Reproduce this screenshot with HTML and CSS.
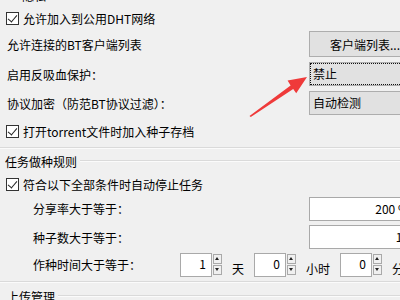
FILE: index.html
```html
<!DOCTYPE html>
<html lang="zh-CN">
<head>
    <meta charset="UTF-8">
    <title>BT设置</title>
    <link rel="stylesheet" href="styles.css">
</head>
<body>
    <div class="panel">
        <div class="row row-cut"><span class="cut-text">隐私</span></div>

        <div class="row row-dht">
            <span class="checkbox checked"></span>
            <span class="label">允许加入到公用DHT网络</span>
        </div>

        <div class="row row-grid row-bt">
            <span class="label">允许连接的BT客户端列表</span>
            <button class="btn">客户端列表...</button>
        </div>

        <div class="row row-grid row-leech">
            <span class="label">启用反吸血保护：</span>
            <div class="select focused">禁止</div>
        </div>

        <div class="row row-grid row-enc">
            <span class="label">协议加密（防范BT协议过滤）：</span>
            <div class="select">自动检测</div>
        </div>

        <div class="row row-torrent">
            <span class="checkbox checked"></span>
            <span class="label">打开torrent文件时加入种子存档</span>
        </div>

        <div class="separator"></div>

        <div class="group-title row-seed-title">
            <span>任务做种规则</span>
            <span class="group-line"></span>
        </div>

        <div class="row row-stop">
            <span class="checkbox checked"></span>
            <span class="label">符合以下全部条件时自动停止任务</span>
        </div>

        <div class="row row-grid indent row-ratio">
            <span class="label">分享率大于等于：</span>
            <div class="input">200 %</div>
        </div>

        <div class="row row-grid indent row-seeds">
            <span class="label">种子数大于等于：</span>
            <div class="input">10</div>
        </div>

        <div class="row indent row-time">
            <span class="label time-label">作种时间大于等于：</span>
            <div class="spin">
                <div class="spin-box">1</div>
                <div class="spin-arrows"><span class="up"></span><span class="down"></span></div>
            </div>
            <span class="unit">天</span>
            <div class="spin">
                <div class="spin-box">0</div>
                <div class="spin-arrows"><span class="up"></span><span class="down"></span></div>
            </div>
            <span class="unit">小时</span>
            <div class="spin">
                <div class="spin-box">0</div>
                <div class="spin-arrows"><span class="up"></span><span class="down"></span></div>
            </div>
            <span class="unit">分钟</span>
        </div>

        <div class="separator sep-bottom"></div>

        <div class="group-title row-upload-title">
            <span>上传管理</span>
            <span class="group-line"></span>
        </div>
    </div>

    <!-- red annotation arrow pointing at the select -->
    <svg class="arrow" width="400" height="300" viewBox="0 0 400 300">
        <polygon points="249.5,116 290.6,85.6 287.6,80.6 307,77 296.2,93.2 293.2,89 250.8,117" fill="#ef3a3a"/>
    </svg>
</body>
</html>
```

FILE: styles.css
```css
/* General Styles */
body {
    margin: 0;
    background-color: #f0f0f0;
    font-family: "Noto Sans CJK SC", "Microsoft YaHei", sans-serif;
    font-size: 12px;
    color: #000;
    overflow: hidden;
    width: 400px;
    height: 300px;
    position: relative;
}

.panel {
    width: 440px;
    display: flex;
    flex-direction: column;
}

.row {
    display: flex;
    align-items: center;
    padding-left: 7px;
    white-space: nowrap;
}

.row-grid {
    display: grid;
    grid-template-columns: 302px auto;
    align-items: center;
}

.indent {
    padding-left: 33px;
}

.indent.row-grid {
    grid-template-columns: 276px auto;
}

/* Row heights */
.row-cut { height: 22px; margin-top: -16px; padding-left: 22px; }
.row-dht { height: 24px; padding-left: 6px; }
.row-bt { height: 28px; }
.row-leech { height: 32px; }
.row-enc { height: 26px; }
.row-torrent { height: 30px; padding-left: 6px; }
.row-stop { height: 22px; padding-left: 6px; }
.row-ratio { height: 27px; }
.row-seeds { height: 30px; }
.row-time { height: 25px; }

/* Checkbox */
.checkbox {
    width: 11px;
    height: 11px;
    border: 1px solid #333;
    background-color: #fff;
    margin-right: 4px;
    position: relative;
    flex-shrink: 0;
}

.checkbox.checked::after {
    content: "";
    position: absolute;
    left: 3px;
    top: 0px;
    width: 4px;
    height: 8px;
    border-right: 1.3px solid #222;
    border-bottom: 1.3px solid #222;
    transform: rotate(40deg);
}

/* Controls */
.btn {
    width: 112px;
    height: 26px;
    background-color: #e1e1e1;
    border: 1px solid #adadad;
    font-family: inherit;
    font-size: 12px;
    color: #000;
    padding: 0;
    text-align: center;
}

.select {
    width: 112px;
    height: 24px;
    box-sizing: border-box;
    background-color: #e1e1e1;
    border: 1px solid #adadad;
    padding-left: 3px;
    line-height: 22px;
}

.select.focused {
    outline: 1px dotted #111;
    outline-offset: -2px;
}

.input {
    width: 105px;
    height: 24px;
    box-sizing: border-box;
    background-color: #fff;
    border: 1px solid #a9a9a9;
    text-align: right;
    padding-right: 4px;
    line-height: 22px;
}

/* Separators */
.separator {
    height: 1px;
    background-color: #dadada;
    border-bottom: 1px solid #fbfbfb;
    margin-top: 1px;
}

.sep-bottom {
    margin-top: 4px;
}

.group-title {
    display: flex;
    align-items: center;
    height: 24px;
    padding-left: 5px;
    white-space: nowrap;
}

.row-upload-title {
    height: 26px;
    padding-left: 7px;
}

.group-line {
    flex: 1;
    height: 1px;
    background-color: #dadada;
    border-bottom: 1px solid #fbfbfb;
    margin-left: 3px;
}

/* Spin boxes */
.time-label {
    width: 147px;
}

.spin {
    display: flex;
    align-items: center;
}

.spin-box {
    width: 32px;
    height: 24px;
    box-sizing: border-box;
    background-color: #fff;
    border: 1px solid #a9a9a9;
    text-align: right;
    padding-right: 5px;
    line-height: 20px;
}

.spin-arrows {
    display: flex;
    flex-direction: column;
    gap: 1px;
    margin-left: 1px;
}

.spin-arrows span {
    width: 9px;
    height: 10px;
    box-sizing: border-box;
    background-color: #f0f0f0;
    border: 1px solid #a9a9a9;
    position: relative;
}

.spin-arrows span::after {
    content: "";
    position: absolute;
    left: 1px;
    top: 2px;
    border-left: 2.5px solid transparent;
    border-right: 2.5px solid transparent;
}

.spin-arrows .up::after {
    border-bottom: 3px solid #222;
}

.spin-arrows .down::after {
    border-top: 3px solid #222;
}

.unit {
    margin-left: 10px;
    margin-right: 10px;
    margin-top: 8px;
}

.arrow {
    position: absolute;
    left: 0;
    top: 0;
}
```
